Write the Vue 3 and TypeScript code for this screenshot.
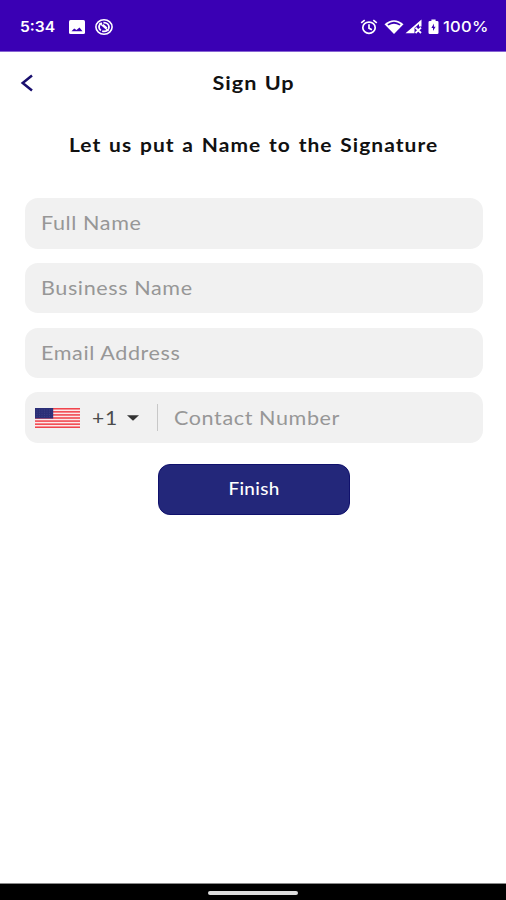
<script setup lang="ts">
import { ref } from 'vue'

interface Field {
  id: string
  label: string
  type: string
}

const fields: Field[] = [
  { id: 'full', label: 'Full Name', type: 'text' },
  { id: 'business', label: 'Business Name', type: 'text' },
  { id: 'email', label: 'Email Address', type: 'email' },
]

const values = ref<Record<string, string>>({ full: '', business: '', email: '' })
const phone = ref('')
const stripes = [0, 2, 4, 6, 8, 10, 12]
</script>

<template>
  <div class="screen">
    <header class="status">
      <div class="group">
        <span class="clock">5:34</span>
        <svg class="picture" viewBox="0 0 16 14">
          <rect width="16" height="14" rx="1.5" fill="#fff" />
          <path d="M2.5 11.2 5.2 8.6l2.3 1.4 3-2.6 3 3.8Z" fill="#3a00b4" />
        </svg>
        <svg class="badge" viewBox="0 0 18 16">
          <g fill="none" stroke="#fff">
            <ellipse cx="9" cy="8" rx="8.1" ry="7.2" stroke-width="1.6" />
            <ellipse cx="9" cy="8" rx="5" ry="4.4" stroke-width="1.8" stroke-dasharray="9 1.5" />
            <path d="M4.5 4 13.5 12M8 5.5l4 3.6" stroke-width="1.3" />
          </g>
        </svg>
      </div>
      <div class="group">
        <svg class="alarm" viewBox="0 0 18 16">
          <g fill="none" stroke="#fff" stroke-width="1.7">
            <ellipse cx="9" cy="8.7" rx="6.2" ry="5.6" />
            <path d="M9 5.2v4l2.9 1.6M1.2 3.9 4.7 1.2M16.8 3.9l-3.5-2.7" />
          </g>
        </svg>
        <svg class="wifi" viewBox="0 0 20 16">
          <path d="M.5 5.2Q10-2.8 19.5 5.2L10 15Z" fill="#fff" />
          <path d="M3.4 5.2Q10 .1 16.6 5.2L15.6 6.4Q10 3.2 4.4 6.4Z" fill="#3a00b4" />
        </svg>
        <svg class="signal" viewBox="0 0 18 15">
          <path d="M.5 14.2 16.5.5v7H14V5L9.5 9v5.2Z" fill="#fff" />
          <path d="m10.5 8.7 5.5 5.3M16 8.7 10.5 14" stroke="#fff" stroke-width="1.8" />
        </svg>
        <svg class="battery" viewBox="0 0 11 16">
          <path d="M3.4.5h4.2V2h1.6q1.3 0 1.3 1.3v10.4q0 1.3-1.3 1.3H1.8Q.5 15 .5 13.7V3.3Q.5 2 1.8 2h1.6Z" fill="#fff" />
          <path d="M5.9 4.5 3.4 9H5v3l2.6-4.3H5.9Z" fill="#3a00b4" />
        </svg>
        <span class="percent">100%</span>
      </div>
    </header>

    <nav class="bar">
      <button class="back" aria-label="Back">
        <svg viewBox="0 0 14 18"><path d="M12 1.5 2.7 9 12 16.5" fill="none" stroke="#190f6e" stroke-width="2.5" /></svg>
      </button>
      <h1 class="title">Sign Up</h1>
    </nav>

    <h2 class="heading">Let us put a Name to the Signature</h2>

    <form class="form" @submit.prevent>
      <label v-for="f in fields" :key="f.id" class="field">
        <input v-model="values[f.id]" :type="f.type" :placeholder="f.label" />
      </label>
      <div class="field phone">
        <svg class="flag" viewBox="0 0 45 20" preserveAspectRatio="none">
          <rect width="45" height="20" fill="#fbe9ea" />
          <rect v-for="s in stripes" :key="s" y="0" width="45" height="1.54" fill="#f0444c" :transform="`translate(0 ${s * 1.5385})`" />
          <rect width="18.2" height="10.5" fill="#2b2f77" />
          <path d="M1.5 2h16M1.5 4.2h16M1.5 6.4h16M1.5 8.6h16" stroke="#4c4e8f" stroke-width=".6" stroke-dasharray="1 1.5" />
        </svg>
        <span class="code">+1</span>
        <svg class="caret" viewBox="0 0 12 6"><path d="M0 .3h12L6 5.8Z" fill="#333" /></svg>
        <span class="divider"></span>
        <input v-model="phone" type="tel" placeholder="Contact Number" />
      </div>
      <button class="finish" type="submit"><span>Finish</span></button>
    </form>

    <footer class="system"><span class="handle"></span></footer>
  </div>
</template>

<style>
body {
  margin: 0;
}
</style>

<style scoped>
.screen {
  display: flex;
  flex-direction: column;
  width: 506px;
  height: 900px;
  overflow: hidden;
  background: #fff;
  font-family: Lato, 'Liberation Sans', sans-serif;
}
.status {
  display: flex;
  justify-content: space-between;
  box-sizing: border-box;
  height: 52px;
  flex: none;
  padding: 2px 18px 0 20px;
  background: #3a00b4;
  border-bottom: 1px solid #8664d2;
  color: #fff;
}
.group {
  display: flex;
  align-items: center;
}
svg {
  display: block;
  flex: none;
}
.clock,
.percent {
  font: 600 14.5px/20px Inter, Roboto, sans-serif;
  transform-origin: left;
}
.clock {
  width: 35px;
  transform: scaleX(1.08);
}
.percent {
  width: 45px;
  font-weight: 500;
  letter-spacing: 0.2px;
  transform: scaleX(1.14);
}
.picture {
  width: 16px;
  height: 14px;
  margin-left: 14px;
}
.badge {
  width: 18px;
  height: 16px;
  margin-left: 10px;
}
.alarm {
  width: 18px;
  height: 16px;
  margin-right: 6px;
}
.wifi {
  width: 20px;
  height: 16px;
  margin-right: 1px;
}
.signal {
  width: 18px;
  height: 15px;
  margin-right: 5px;
}
.battery {
  width: 11px;
  height: 16px;
  margin-right: 4px;
}
.bar {
  display: grid;
  grid-template-columns: 54px 1fr 54px;
  align-items: center;
  height: 61px;
  flex: none;
}
.back {
  padding: 0 0 0 20px;
  border: 0;
  background: none;
}
.back svg {
  width: 14px;
  height: 18px;
}
.title,
.heading {
  margin: 0;
  color: #111;
  text-align: center;
  font-weight: 700;
  white-space: nowrap;
}
.title {
  padding-left: 1px;
  font-size: 18.5px;
  line-height: 24px;
  letter-spacing: 0.8px;
  word-spacing: 1px;
  transform: scaleX(1.17);
}
.heading {
  padding: 20px 0 0 1px;
  font-size: 18px;
  line-height: 24px;
  letter-spacing: 0.9px;
  word-spacing: 1.4px;
  transform: scaleX(1.164);
}
.form {
  display: flex;
  flex-direction: column;
  gap: 14.3px;
  padding: 41px 23px 0 24.5px;
}
.field {
  display: flex;
  align-items: center;
  box-sizing: border-box;
  height: 50.5px;
  padding-left: 16px;
  overflow: hidden;
  border-radius: 13px;
  background: #f1f1f1;
}
input {
  flex: 1;
  min-width: 0;
  padding: 0;
  border: 0;
  outline: 0;
  background: none;
  font: 400 19.5px/24px Lato, sans-serif;
  letter-spacing: 0.55px;
  transform: scaleX(1.105);
  transform-origin: left;
}
input::placeholder {
  color: #979797;
  opacity: 1;
}
.phone {
  padding-left: 10px;
}
.flag {
  width: 45px;
  height: 20px;
}
.code {
  width: 26px;
  margin-left: 12px;
  color: #4c4c4c;
  font-size: 19.5px;
  line-height: 24px;
  letter-spacing: 0.8px;
  transform: scaleX(1.08);
  transform-origin: left;
}
.caret {
  width: 12px;
  height: 6px;
  margin-left: 9px;
}
.divider {
  width: 1px;
  height: 27px;
  margin: 0 16px 0 18px;
  background: #c8c8c8;
}
.finish {
  align-self: center;
  width: 192px;
  height: 51px;
  margin-top: 6.6px;
  padding: 0;
  border: 1.5px solid #10116c;
  border-radius: 12px;
  background: #23277a;
  color: #fff;
  font: 500 17.5px/24px Lato, sans-serif;
}
.finish span {
  display: block;
  letter-spacing: 0.3px;
  transform: scaleX(1.08);
}
.system {
  display: flex;
  justify-content: center;
  box-sizing: border-box;
  height: 17px;
  margin-top: auto;
  padding-top: 7px;
  border-top: 1px solid #8a8a8a;
  background: #000;
}
.handle {
  width: 90px;
  height: 4px;
  border-radius: 2px;
  background: #ddd;
}
</style>
